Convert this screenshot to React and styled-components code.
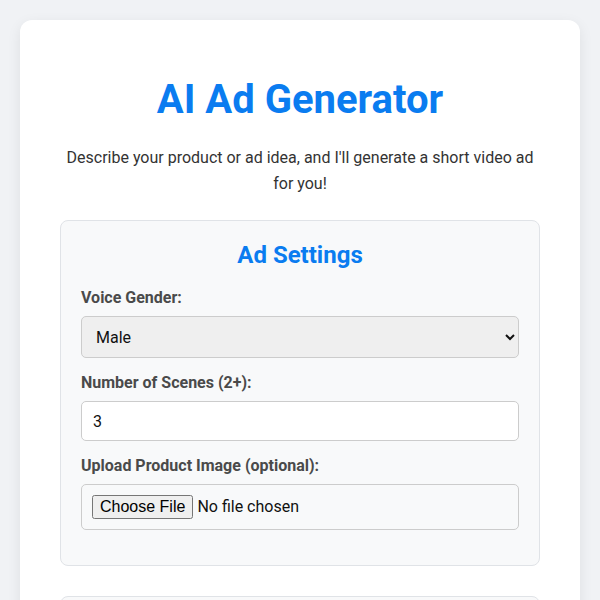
import React from "react";
import styled, { createGlobalStyle } from "styled-components";

const GlobalStyle = createGlobalStyle`
  body {
    margin: 0;
    background: #f0f2f5;
    font-family: Roboto, "Liberation Sans", sans-serif;
    color: #333;
  }
`;

const Page = styled.div`
  padding: 20px;
`;

const Card = styled.div`
  background: #fff;
  border-radius: 12px;
  box-shadow: 0 4px 14px rgba(0, 0, 0, 0.08);
  padding: 40px 40px 30px;
`;

const Title = styled.h1`
  color: #0a7cf0;
  font-size: 40px;
  line-height: 48px;
  font-weight: 700;
  text-align: center;
  margin: 16px 0 21px;
`;

const Intro = styled.p`
  font-size: 16px;
  line-height: 25.6px;
  text-align: center;
  color: #333;
  margin: 0 0 24px;
`;

const Panel = styled.section`
  background: #f8f9fa;
  border: 1px solid #e0e3e7;
  border-radius: 8px;
  padding: 20px;
  margin-bottom: 30px;
`;

const PanelTitle = styled.h2`
  color: #0a7cf0;
  font-size: 24px;
  line-height: 28px;
  font-weight: 700;
  text-align: center;
  margin: 0 0 19px;
`;

const Group = styled.div`
  margin-bottom: 15px;
`;

const Label = styled.label`
  display: block;
  font-size: 16px;
  line-height: 19px;
  font-weight: 700;
  color: #4a4a4a;
  margin-bottom: 9px;
`;

const fieldBase = `
  display: block;
  width: 100%;
  box-sizing: border-box;
  font-family: Roboto, "Liberation Sans", sans-serif;
  font-size: 16px;
  color: #111;
  border: 1px solid #ccc;
  border-radius: 5px;
`;

const Select = styled.select`
  ${fieldBase}
  height: 42px;
  padding: 0 10px;
  background: #efefef;
`;

const Input = styled.input`
  ${fieldBase}
  height: 40px;
  padding: 0 11px;
  background: #fff;
`;

const FileInput = styled.input`
  ${fieldBase}
  height: 46px;
  padding: 10px;
  background: #f8f9fa;
`;

export default function App() {
  return (
    <>
      <GlobalStyle />
      <Page>
        <Card>
          <Title>AI Ad Generator</Title>
          <Intro>
            Describe your product or ad idea, and I'll generate a short video ad
            for you!
          </Intro>
          <Panel>
            <PanelTitle>Ad Settings</PanelTitle>
            <Group>
              <Label htmlFor="gender">Voice Gender:</Label>
              <Select id="gender" defaultValue="male">
                <option value="male">Male</option>
                <option value="female">Female</option>
              </Select>
            </Group>
            <Group>
              <Label htmlFor="scenes">Number of Scenes (2+):</Label>
              <Input id="scenes" type="number" min="2" defaultValue="3" />
            </Group>
            <Group>
              <Label htmlFor="image">Upload Product Image (optional):</Label>
              <FileInput id="image" type="file" accept="image/*" />
            </Group>
          </Panel>
          <Panel>
            <PanelTitle>Your Ad Idea</PanelTitle>
          </Panel>
        </Card>
      </Page>
    </>
  );
}
